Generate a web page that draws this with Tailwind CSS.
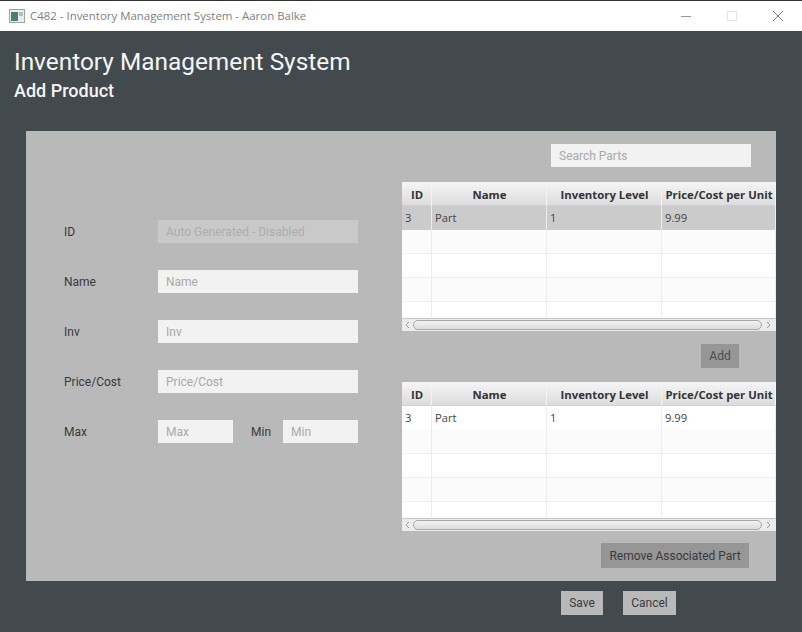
<!DOCTYPE html>
<html lang="en">
<head>
  <meta charset="UTF-8">
  <meta name="viewport" content="width=device-width, initial-scale=1.0">
  <script src="https://cdn.jsdelivr.net/npm/@tailwindcss/browser@4"></script>
  <title>Add Product</title>
</head>
<body class="overflow-hidden bg-[#434a4d]">
  <div class="flex flex-col w-[802px] h-[632px] border-t border-[#333] font-['Roboto',sans-serif] text-[12px]">
    <!-- title bar -->
    <div class="flex items-center h-[30px] bg-white shrink-0">
      <svg class="ml-[9px] w-[16px] h-[14px]" viewBox="0 0 16 14">
        <rect x="0.5" y="0.5" width="15" height="13" fill="#e8ecec" stroke="#9aa4a4"/>
        <rect x="2" y="3" width="7" height="9" fill="#4a7f78"/>
        <rect x="10" y="3" width="4" height="4" fill="#b4c0c0"/>
      </svg>
      <span class="ml-[5px] text-[11.45px] text-[#808080] font-['Open_Sans',sans-serif] w-[300px] whitespace-nowrap">C482 - Inventory Management System - Aaron Balke</span>
      <div class="ml-auto flex items-center">
        <svg class="w-[12px] h-[12px] mr-[34px]" viewBox="0 0 12 12"><path d="M1 6.5h10" stroke="#999" fill="none"/></svg>
        <svg class="w-[12px] h-[12px] mr-[34px]" viewBox="0 0 12 12"><rect x="1.5" y="1.5" width="9" height="9" stroke="#e2e2e2" fill="none"/></svg>
        <svg class="w-[12px] h-[12px] mr-[18px]" viewBox="0 0 12 12"><path d="M1 1l10 10M11 1L1 11" stroke="#777" fill="none"/></svg>
      </div>
    </div>

    <!-- heading -->
    <div class="pl-[14px] pt-[15px] h-[100px] shrink-0 text-[#f4f5f5]">
      <div class="text-[24.4px] leading-[32px] font-[450]">Inventory Management System</div>
      <div class="text-[18px] leading-[24px] font-medium mt-[1px]">Add Product</div>
    </div>

    <!-- panel -->
    <div class="flex ml-[26px] w-[750px] h-[450px] bg-[#b9b9b9] shrink-0">
      <div class="w-[376px] pl-[38px] pt-[89px] flex flex-col gap-[27px] text-[#3a3a3a]">
        <div class="flex items-center h-[23px]">
          <span class="w-[94px]">ID</span>
          <div class="w-[200px] h-[23px] pl-[8px] leading-[24px] bg-[#c9c9c9] text-[#adadad]">Auto Generated - Disabled</div>
        </div>
        <div class="flex items-center h-[23px]">
          <span class="w-[94px]">Name</span>
          <div class="w-[200px] h-[23px] pl-[8px] leading-[24px] bg-[#f2f2f2] text-[#a9a9a9]">Name</div>
        </div>
        <div class="flex items-center h-[23px]">
          <span class="w-[94px]">Inv</span>
          <div class="w-[200px] h-[23px] pl-[8px] leading-[24px] bg-[#f2f2f2] text-[#a9a9a9]">Inv</div>
        </div>
        <div class="flex items-center h-[23px]">
          <span class="w-[94px]">Price/Cost</span>
          <div class="w-[200px] h-[23px] pl-[8px] leading-[24px] bg-[#f2f2f2] text-[#a9a9a9]">Price/Cost</div>
        </div>
        <div class="flex items-center h-[23px]">
          <span class="w-[94px]">Max</span>
          <div class="w-[75px] h-[23px] pl-[8px] leading-[24px] bg-[#f2f2f2] text-[#a9a9a9]">Max</div>
          <span class="ml-[18px] w-[32px]">Min</span>
          <div class="w-[75px] h-[23px] pl-[8px] leading-[24px] bg-[#f2f2f2] text-[#a9a9a9]">Min</div>
        </div>
      </div>

      <div class="w-[374px] flex flex-col">
        <div class="mt-[13px] ml-[149px] w-[200px] h-[23px] pl-[8px] leading-[24px] bg-[#f2f2f2] text-[#a9a9a9]">Search Parts</div>
        <div id="parts" class="mt-[15px]"></div>
        <div class="mt-[13px] ml-[299px] w-[38px] h-[24px] leading-[24px] text-center bg-[#969696] text-[#4c4c4c]">Add</div>
        <div id="associated" class="mt-[14px]"></div>
        <div class="mt-[12px] ml-[199px] w-[148px] h-[25px] leading-[26px] text-center bg-[#969696] text-[#3a3a3a]">Remove Associated Part</div>
      </div>
    </div>

    <!-- footer buttons -->
    <div class="flex ml-[561px] mt-[10px] gap-[20px] text-[#3a3a3a]">
      <div class="w-[42px] h-[24px] leading-[24px] text-center bg-[#b9b9b9]">Save</div>
      <div class="w-[53px] h-[24px] leading-[24px] text-center bg-[#b9b9b9]">Cancel</div>
    </div>
  </div>

  <script>
    const headers = ["ID", "Name", "Inventory Level", "Price/Cost per Unit"];
    const columnClasses = ["w-[30px]", "w-[115px]", "w-[115px]", "w-[114px]"];

    function renderTable(id, selected) {
      const head = headers
        .map((h, i) => `<div class="${columnClasses[i]} shrink-0 h-full pl-[1px] leading-[25px] text-center text-[11.35px] font-bold text-[#333] font-['Open_Sans',sans-serif] whitespace-nowrap border-r border-[#f4f4f4] bg-gradient-to-b from-[#f6f6f6] to-[#dcdcdc] border-b border-b-[#d0d0d0]">${h}</div>`)
        .join("");

      const cells = (vals) =>
        vals
          .map((v, i) => `<div class="${columnClasses[i]} shrink-0 h-full pl-[3px] leading-[24px] text-[11.2px] font-['Open_Sans',sans-serif] text-[#444] border-r border-[#ececec]">${v}</div>`)
          .join("");

      let rows = `<div class="flex h-[24px] ${selected ? "bg-[#cbcbcb]" : "bg-white"}">${cells(["3", "Part", "1", "9.99"])}</div>`;
      for (let i = 0; i < 4; i++) {
        rows += `<div class="flex shrink-0 h-[24px] border-b border-[#eeeeee] ${i % 2 === 0 ? "bg-[#fbfbfb]" : "bg-white"}">${cells(["", "", "", ""])}</div>`;
      }

      document.getElementById(id).innerHTML = `
        <div class="w-[374px] h-[149px] flex flex-col overflow-hidden bg-white">
          <div class="flex h-[24px] shrink-0">${head}</div>
          <div class="h-[112px] shrink-0 overflow-hidden">${rows}</div>
          <div class="flex items-center h-[13px] shrink-0 bg-[#ececec] border-t border-[#c8c8c8]">
            <svg class="w-[11px] h-[12px] shrink-0" viewBox="0 0 11 12"><path d="M7 3L4 6l3 3" stroke="#999" fill="none"/></svg>
            <div class="w-[349px] h-[10px] rounded-[5px] border border-[#a8a8a8] bg-gradient-to-b from-[#f2f2f2] to-[#dcdcdc]"></div>
            <svg class="w-[12px] h-[12px] shrink-0" viewBox="0 0 12 12"><path d="M5 3l3 3-3 3" stroke="#999" fill="none"/></svg>
          </div>
        </div>`;
    }

    renderTable("parts", true);
    renderTable("associated", false);
  </script>
</body>
</html>
